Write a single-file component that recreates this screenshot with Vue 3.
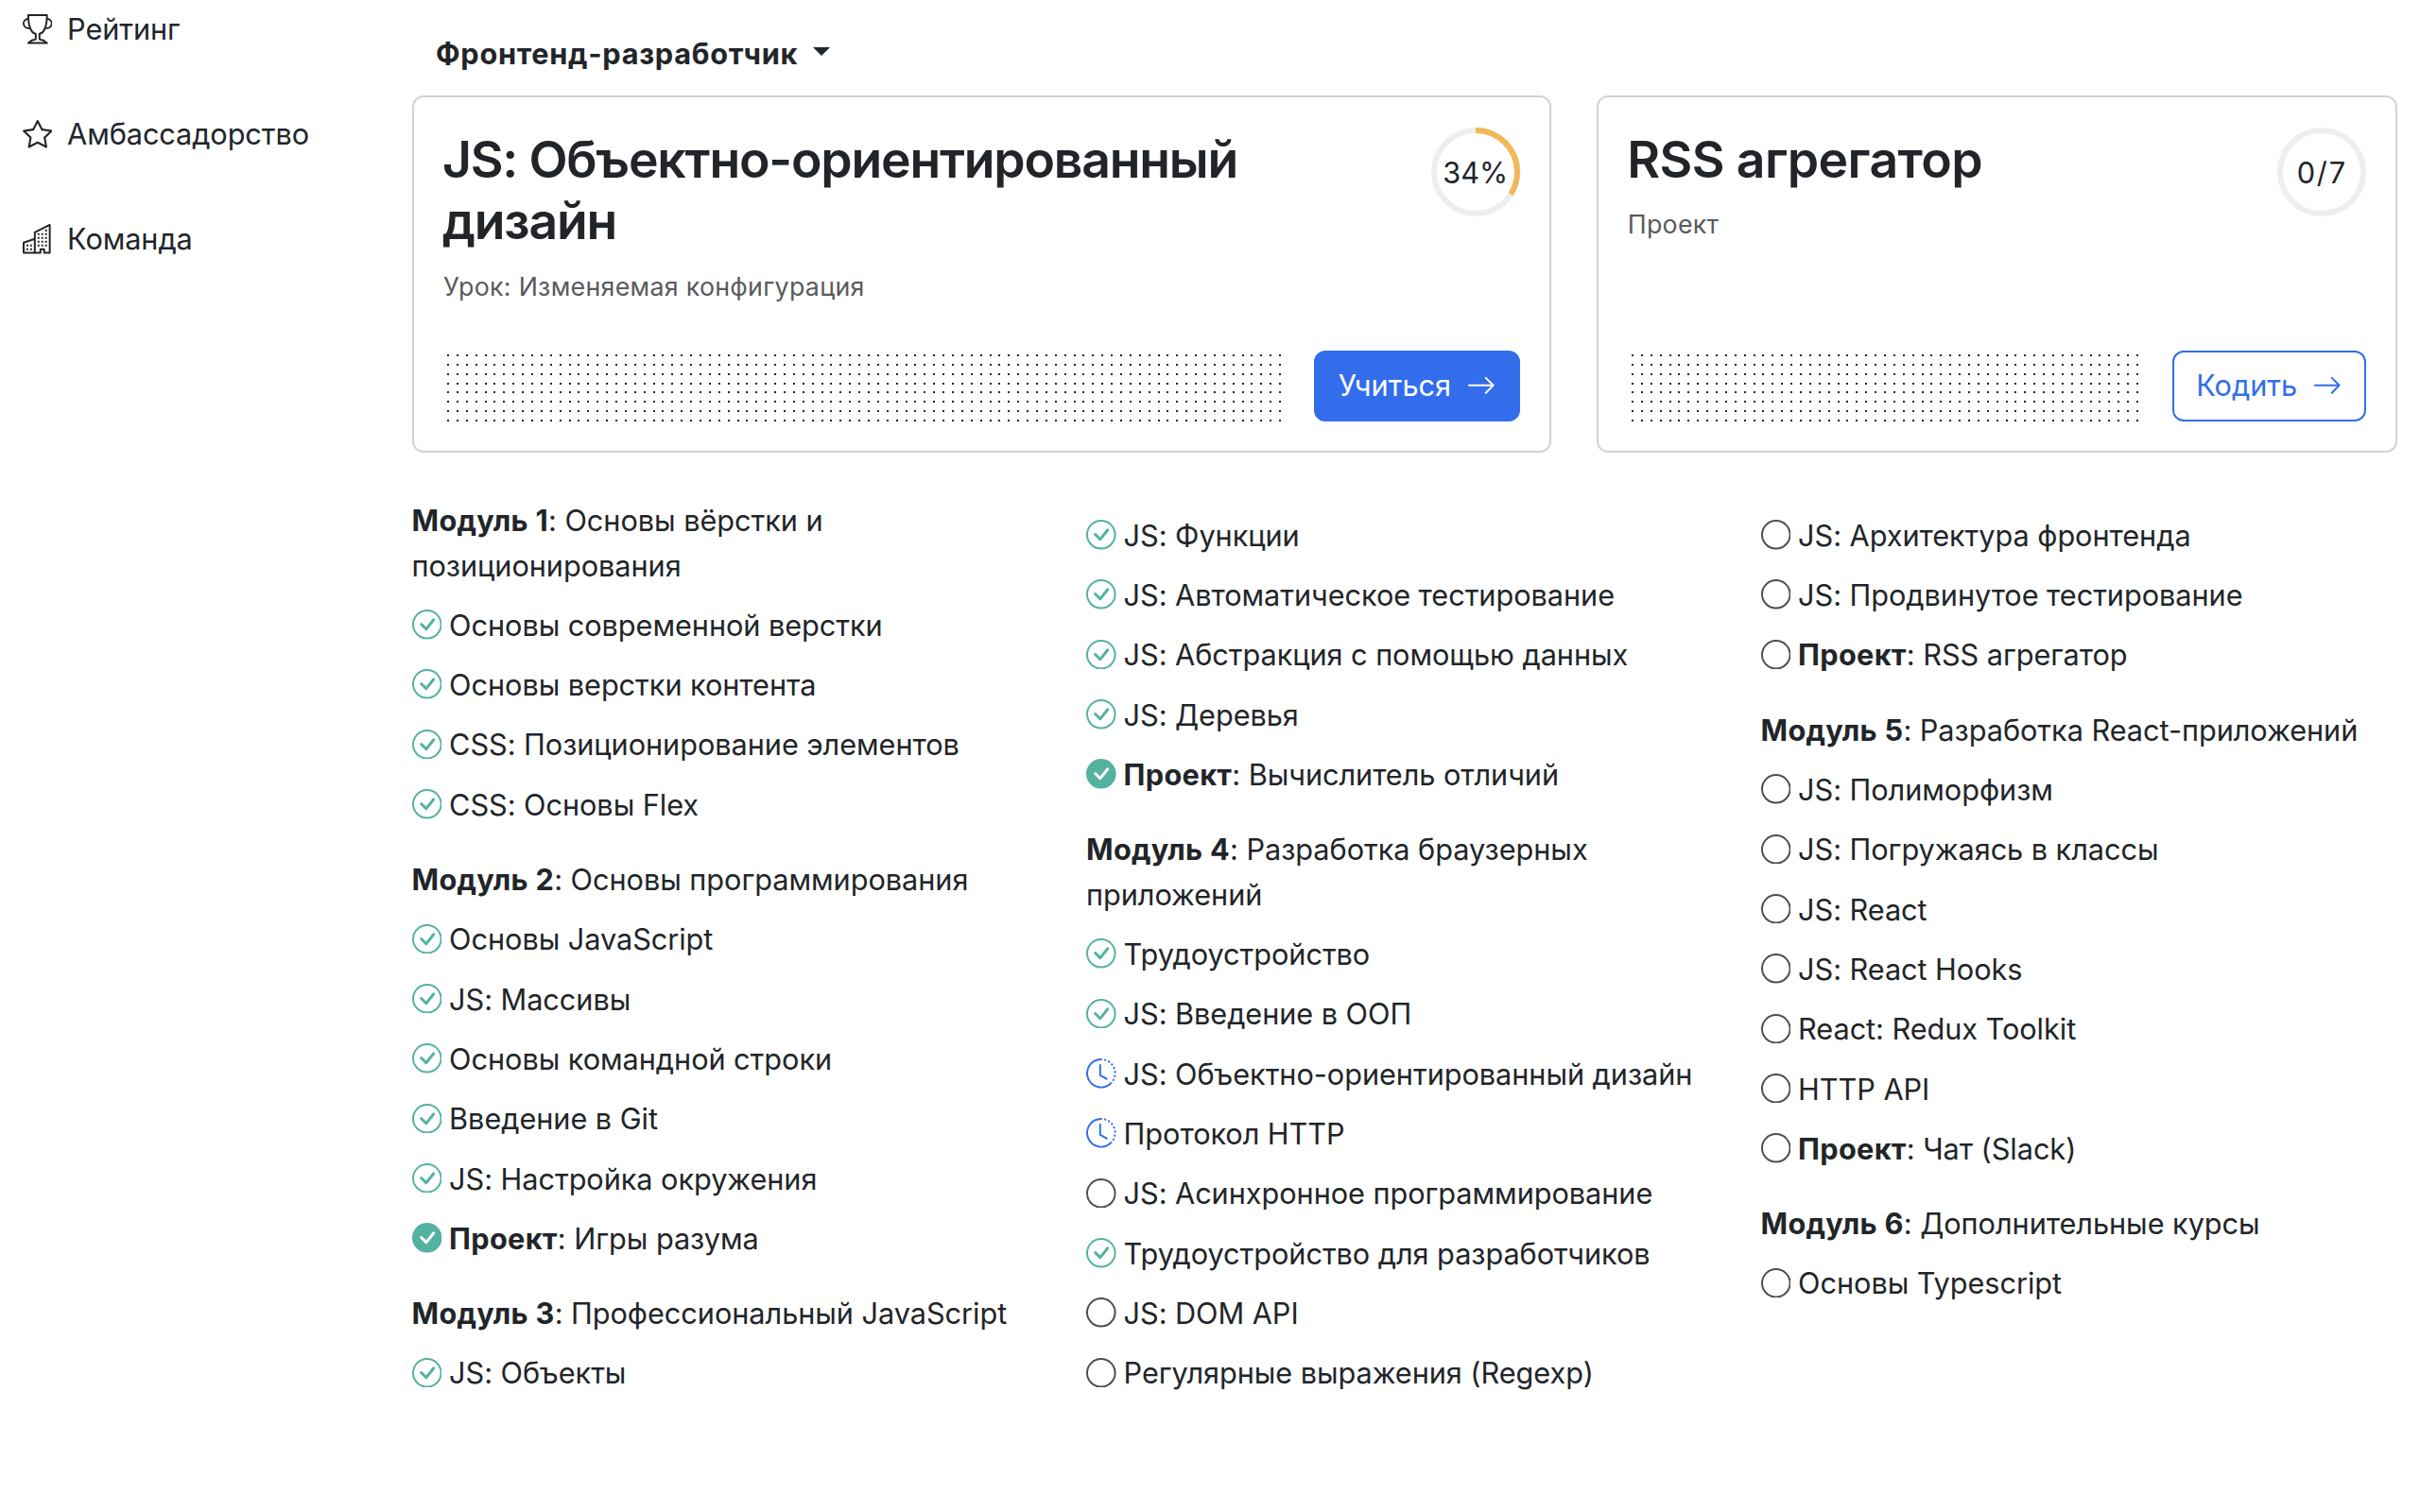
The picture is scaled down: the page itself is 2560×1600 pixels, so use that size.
<script setup>
const icons = {
  trophy: ['M2.5.5A.5.5 0 0 1 3 0h10a.5.5 0 0 1 .5.5q0 .807-.034 1.536a3 3 0 1 1-1.133 5.89c-.79 1.865-1.878 2.777-2.833 3.011v2.173l1.425.356c.194.048.377.135.537.255L13.3 15.1a.5.5 0 0 1-.3.9H3a.5.5 0 0 1-.3-.9l1.838-1.379c.16-.12.343-.207.537-.255L6.5 13.11v-2.173c-.955-.234-2.043-1.146-2.833-3.012a3 3 0 1 1-1.132-5.89A33 33 0 0 1 2.5.5m.099 2.54a2 2 0 0 0 .72 3.935c-.333-1.05-.588-2.346-.72-3.935m10.083 3.935a2 2 0 0 0 .72-3.935c-.133 1.59-.388 2.885-.72 3.935M3.504 1q.01.775.056 1.469c.13 2.028.457 3.546.87 4.667C5.294 9.48 6.484 10 7 10a.5.5 0 0 1 .5.5v2.61a1 1 0 0 1-.757.97l-1.426.356a.5.5 0 0 0-.179.085L4.5 15h7l-.638-.479a.5.5 0 0 0-.18-.085l-1.425-.356a1 1 0 0 1-.757-.97V10.5A.5.5 0 0 1 9 10c.516 0 1.706-.52 2.57-2.864.413-1.12.74-2.64.87-4.667q.045-.694.056-1.469z'],
  star: ['M2.866 14.85c-.078.444.36.791.746.593l4.39-2.256 4.389 2.256c.386.198.824-.149.746-.592l-.83-4.73 3.522-3.356c.33-.314.16-.888-.282-.95l-4.898-.696L8.465.792a.513.513 0 0 0-.927 0L5.354 5.12l-4.898.696c-.441.062-.612.636-.283.95l3.523 3.356-.83 4.73zm4.905-2.767-3.686 1.894.694-3.957a.56.56 0 0 0-.163-.505L1.71 6.745l4.052-.576a.53.53 0 0 0 .393-.288L8 2.223l1.847 3.658a.53.53 0 0 0 .393.288l4.052.575-2.906 2.77a.56.56 0 0 0-.163.506l.694 3.957-3.686-1.894a.5.5 0 0 0-.461 0z'],
  buildings: [
    'M14.763.075A.5.5 0 0 1 15 .5v15a.5.5 0 0 1-.5.5h-3a.5.5 0 0 1-.5-.5V14h-1v1.5a.5.5 0 0 1-.5.5h-9a.5.5 0 0 1-.5-.5V10a.5.5 0 0 1 .342-.474L6 7.64V4.5a.5.5 0 0 1 .276-.447l8-4a.5.5 0 0 1 .487.022M6 8.694 1 10.36V15h5zM7 15h2v-1.5a.5.5 0 0 1 .5-.5h2a.5.5 0 0 1 .5.5V15h2V1.309l-7 3.5z',
    'M2 11h1v1H2zm2 0h1v1H4zm-2 2h1v1H2zm2 0h1v1H4zm4-4h1v1H8zm2 0h1v1h-1zm-2 2h1v1H8zm2 0h1v1h-1zm2-2h1v1h-1zm0 2h1v1h-1zM8 7h1v1H8zm2 0h1v1h-1zm2 0h1v1h-1zM8 5h1v1H8zm2 0h1v1h-1zm2 0h1v1h-1zm0-2h1v1h-1z',
  ],
  arrow: ['M1 8a.5.5 0 0 1 .5-.5h11.793l-3.147-3.146a.5.5 0 0 1 .708-.708l4 4a.5.5 0 0 1 0 .708l-4 4a.5.5 0 0 1-.708-.708L13.293 8.5H1.5A.5.5 0 0 1 1 8'],
  done: [
    'M8 15A7 7 0 1 1 8 1a7 7 0 0 1 0 14m0 1A8 8 0 1 0 8 0a8 8 0 0 0 0 16',
    'm10.97 4.97-.02.022-3.473 4.425-2.093-2.094a.75.75 0 0 0-1.06 1.06L6.97 11.03a.75.75 0 0 0 1.079-.02l3.992-4.99a.75.75 0 0 0-1.071-1.05',
  ],
  full: ['M16 8A8 8 0 1 1 0 8a8 8 0 0 1 16 0m-3.97-3.03a.75.75 0 0 0-1.08.022L7.477 9.417 5.384 7.323a.75.75 0 0 0-1.06 1.06L6.97 11.03a.75.75 0 0 0 1.079-.02l3.992-4.99a.75.75 0 0 0-.01-1.05z'],
  progress: [
    'M8.515 1.019A7 7 0 0 0 8 1V0a8 8 0 0 1 .589.022zm2.004.45a7 7 0 0 0-.985-.299l.219-.976q.576.129 1.126.342zm1.37.71a7 7 0 0 0-.439-.27l.493-.87a8 8 0 0 1 .979.654l-.615.789a7 7 0 0 0-.418-.302zm1.834 1.79a7 7 0 0 0-.653-.796l.724-.69q.406.429.747.91zm.744 1.352a7 7 0 0 0-.214-.468l.893-.45a8 8 0 0 1 .45 1.088l-.95.313a7 7 0 0 0-.179-.483m.53 2.507a7 7 0 0 0-.1-1.025l.985-.17q.1.58.116 1.17zm-.131 1.538q.05-.254.081-.51l.993.123a8 8 0 0 1-.23 1.155l-.964-.267q.069-.247.12-.501m-.952 2.379q.276-.436.486-.908l.914.405q-.24.54-.555 1.038zm-.964 1.205q.183-.183.35-.378l.758.653a8 8 0 0 1-.401.432z',
    'M8 1a7 7 0 1 0 4.95 11.95l.707.707A8.001 8.001 0 1 1 8 0z',
    'M7.5 3a.5.5 0 0 1 .5.5v5.21l3.248 1.856a.5.5 0 0 1-.496.868l-3.5-2A.5.5 0 0 1 7 9V3.5a.5.5 0 0 1 .5-.5',
  ],
  todo: ['M8 15A7 7 0 1 1 8 1a7 7 0 0 1 0 14m0 1A8 8 0 1 0 8 0a8 8 0 0 0 0 16'],
}

const nav = [
  { icon: 'trophy', label: 'Рейтинг' },
  { icon: 'star', label: 'Амбассадорство' },
  { icon: 'buildings', label: 'Команда' },
]

const cards = [
  { kind: 'primary', title: 'JS: Объектно-ориентированный дизайн', note: 'Урок: Изменяемая конфигурация', badge: '34%', share: 0.34, action: 'Учиться', dots: 90 },
  { kind: 'outline', title: 'RSS агрегатор', note: 'Проект', badge: '0/7', share: 0, action: 'Кодить', dots: 55 },
]

const ringLength = 2 * Math.PI * 44

function dotPath(count) {
  let d = ''
  for (let row = 0; row < 8; row++) {
    for (let i = 0; i < count; i++) {
      d += `M${Math.round(i * 9.889)} ${Math.round(row * 9.87)}h2v2h-2z`
    }
  }
  return d
}

const columns = [
  [
    {
      name: 'Модуль 1', title: 'Основы вёрстки и позиционирования',
      items: [
        ['done', 'Основы современной верстки'],
        ['done', 'Основы верстки контента'],
        ['done', 'CSS: Позиционирование элементов'],
        ['done', 'CSS: Основы Flex'],
      ],
    },
    {
      name: 'Модуль 2', title: 'Основы программирования',
      items: [
        ['done', 'Основы JavaScript'],
        ['done', 'JS: Массивы'],
        ['done', 'Основы командной строки'],
        ['done', 'Введение в Git'],
        ['done', 'JS: Настройка окружения'],
        ['full', 'Игры разума', true],
      ],
    },
    {
      name: 'Модуль 3', title: 'Профессиональный JavaScript',
      items: [['done', 'JS: Объекты']],
    },
  ],
  [
    {
      items: [
        ['done', 'JS: Функции'],
        ['done', 'JS: Автоматическое тестирование'],
        ['done', 'JS: Абстракция с помощью данных'],
        ['done', 'JS: Деревья'],
        ['full', 'Вычислитель отличий', true],
      ],
    },
    {
      name: 'Модуль 4', title: 'Разработка браузерных приложений',
      items: [
        ['done', 'Трудоустройство'],
        ['done', 'JS: Введение в ООП'],
        ['progress', 'JS: Объектно-ориентированный дизайн'],
        ['progress', 'Протокол HTTP'],
        ['todo', 'JS: Асинхронное программирование'],
        ['done', 'Трудоустройство для разработчиков'],
        ['todo', 'JS: DOM API'],
        ['todo', 'Регулярные выражения (Regexp)'],
      ],
    },
  ],
  [
    {
      items: [
        ['todo', 'JS: Архитектура фронтенда'],
        ['todo', 'JS: Продвинутое тестирование'],
        ['todo', 'RSS агрегатор', true],
      ],
    },
    {
      name: 'Модуль 5', title: 'Разработка React-приложений',
      items: [
        ['todo', 'JS: Полиморфизм'],
        ['todo', 'JS: Погружаясь в классы'],
        ['todo', 'JS: React'],
        ['todo', 'JS: React Hooks'],
        ['todo', 'React: Redux Toolkit'],
        ['todo', 'HTTP API'],
        ['todo', 'Чат (Slack)', true],
      ],
    },
    {
      name: 'Модуль 6', title: 'Дополнительные курсы',
      items: [['todo', 'Основы Typescript']],
    },
  ],
]
</script>

<template>
  <div class="page">
    <nav class="sidebar">
      <a v-for="n in nav" :key="n.label" class="nav-link">
        <svg class="icon" viewBox="0 0 16 16"><path v-for="d in icons[n.icon]" :key="d" :d="d" /></svg>
        <span>{{ n.label }}</span>
      </a>
    </nav>
    <main class="content">
      <div class="profession"><span>Фронтенд-разработчик</span><i class="caret"></i></div>
      <section class="cards">
        <article v-for="c in cards" :key="c.title" class="card" :class="c.kind">
          <div class="card-head">
            <div class="card-text">
              <h2>{{ c.title }}</h2>
              <p>{{ c.note }}</p>
            </div>
            <div class="ring">
              <svg viewBox="0 0 94 94">
                <circle class="track" cx="47" cy="47" r="44" />
                <circle v-if="c.share" class="value" cx="47" cy="47" r="44" transform="rotate(-90 47 47)" :stroke-dasharray="`${ringLength * c.share} ${ringLength}`" />
              </svg>
              <span>{{ c.badge }}</span>
            </div>
          </div>
          <div class="card-foot">
            <svg class="dots" shape-rendering="crispEdges"><path :d="dotPath(c.dots)" /></svg>
            <a class="btn">
              <span>{{ c.action }}</span>
              <svg class="icon" viewBox="0 0 16 16"><path v-for="d in icons.arrow" :key="d" :d="d" /></svg>
            </a>
          </div>
        </article>
      </section>
      <section class="program">
        <div v-for="(col, ci) in columns" :key="ci" class="column">
          <div v-for="(m, mi) in col" :key="mi" class="module">
            <div v-if="m.name" class="module-title"><b>{{ m.name }}</b>: {{ m.title }}</div>
            <div v-for="it in m.items" :key="it[1]" class="item" :class="it[0]">
              <svg class="icon" viewBox="0 0 16 16"><path v-for="d in icons[it[0]]" :key="d" :d="d" /></svg>
              <span><template v-if="it[2]"><b>Проект</b>: </template>{{ it[1] }}</span>
            </div>
          </div>
        </div>
      </section>
    </main>
  </div>
</template>

<style>
body {
  margin: 0;
  background: #fff;
}
</style>

<style scoped>
.page {
  display: flex;
  width: 2560px;
  height: 1600px;
  overflow: hidden;
  box-sizing: border-box;
  font-family: Inter, "Noto Sans", sans-serif;
  font-size: 30.7px;
  line-height: 47.5px;
  color: #212529;
  background: #fff;
}
.icon {
  display: block;
  flex: none;
  width: 31.6px;
  height: 31.6px;
  fill: currentColor;
}
.sidebar {
  display: flex;
  flex-direction: column;
  flex: none;
  gap: 63.5px;
  width: 412px;
  padding: 7px 0 0 23.5px;
}
.nav-link {
  display: flex;
  align-items: center;
  gap: 16px;
  letter-spacing: -0.1px;
}
.content {
  width: 2100px;
}
.profession {
  display: flex;
  align-items: center;
  height: 47.5px;
  padding: 33px 0 20.5px 25.5px;
  font-weight: 700;
  letter-spacing: 0.7px;
}
.caret {
  margin: -4px 0 0 15.5px;
  border: 9px solid transparent;
  border-top-color: currentColor;
  border-bottom: 0;
}
.cards {
  display: flex;
  gap: 48px;
  margin-left: 0.5px;
}
.card {
  display: flex;
  flex-direction: column;
  justify-content: space-between;
  box-sizing: border-box;
  width: 1205px;
  height: 378px;
  padding: 31.5px 30.5px 31.5px 31.5px;
  border: 2px solid #d3d3d4;
  border-radius: 12px;
}
.card.outline {
  width: 847px;
}
.card-head {
  display: flex;
  justify-content: space-between;
}
.card-text {
  width: 900px;
  padding-top: 1.5px;
}
.outline .card-text {
  width: 600px;
}
h2 {
  margin: 0 0 16px -1.5px;
  font-size: 53.5px;
  line-height: 65.3px;
  font-weight: 600;
  letter-spacing: -1.22px;
}
.outline h2 {
  margin-left: -1px;
  letter-spacing: -0.6px;
}
p {
  margin: 0 0 0 -0.5px;
  font-size: 26.8px;
  line-height: 41px;
  letter-spacing: 0.27px;
  color: #595a5c;
}
.ring {
  display: grid;
  place-items: center;
  width: 94px;
  height: 94px;
  margin-right: 0.5px;
}
.ring > * {
  grid-area: 1 / 1;
}
.ring svg {
  width: 94px;
  height: 94px;
}
.ring span {
  padding-top: 2px;
}
.outline .ring span {
  padding-left: 1.5px;
  letter-spacing: 1.8px;
}
.ring circle {
  fill: none;
  stroke-width: 6;
}
.ring .track {
  stroke: #eee;
}
.ring .value {
  stroke: #f0b859;
}
.card-foot {
  display: flex;
  justify-content: space-between;
}
.dots {
  width: 890px;
  height: 71px;
  margin: 4px 0 0 3px;
  fill: #212529;
}
.outline .dots {
  width: 540px;
  margin-left: 4px;
}
.btn {
  display: flex;
  align-items: center;
  justify-content: center;
  gap: 16px;
  box-sizing: border-box;
  width: 218px;
  height: 75px;
  border: 2px solid #336dec;
  border-radius: 12px;
  color: #fff;
  background: #336dec;
}
.outline .btn {
  width: 205px;
  color: #336dec;
  background: #fff;
}
.program {
  display: flex;
  margin-top: 48px;
}
.column {
  width: 713.5px;
  flex: none;
}
.module {
  margin-bottom: 31.7px;
}
.module-title {
  width: 666px;
  letter-spacing: -0.05px;
}
.item {
  display: flex;
  align-items: center;
  gap: 8px;
  margin-top: 15.83px;
  white-space: nowrap;
  letter-spacing: -0.06px;
}
.item .icon {
  margin-top: -1.5px;
}
.item.done .icon,
.item.full .icon {
  color: #53b2a0;
}
.item.progress .icon {
  color: #336dec;
}
.item.todo .icon {
  color: #4c4d50;
}
b {
  font-weight: 700;
  letter-spacing: 0.3px;
}
</style>
